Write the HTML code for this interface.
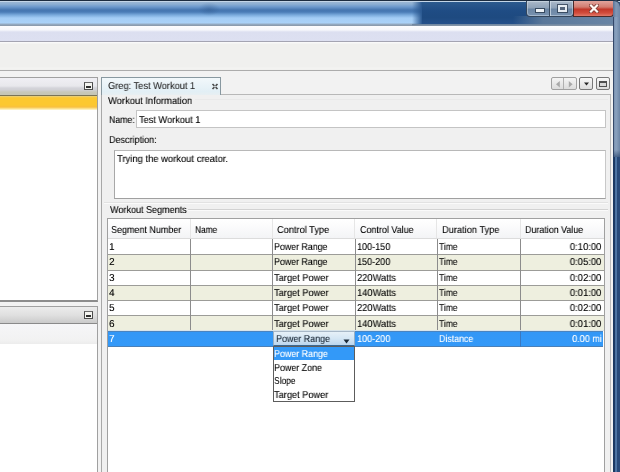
<!DOCTYPE html>
<html><head><meta charset="utf-8">
<style>
*{margin:0;padding:0;box-sizing:border-box}
html,body{width:620px;height:472px;overflow:hidden;background:#f0f0f0}
body{position:relative;font-family:"Liberation Sans",sans-serif;font-size:9.5px;color:#000}
.a{position:absolute}
.t{position:absolute;white-space:pre;line-height:11px;font-size:10px;text-rendering:geometricPrecision;will-change:transform;text-shadow:0.3px 0 0 rgba(0,0,0,0.3)}
</style></head><body>

<!-- title bar -->
<div class="a" id="title" style="left:0;top:0;width:620px;height:26px;background:linear-gradient(to bottom,#1c2c40 0px,#1c2c40 1px,#c4d6e8 1px,#c4d6e8 2px,#9ab6d4 2px,#8eb0d4 4px,#6b98cc 7px,#4676b0 10px,#4a7cb6 12px,#7aaadc 15px,#a4cdf5 18px,#aad2f8 23px,#96aec6 24px,#8896a6 26px)"></div>
<div class="a" style="left:422px;top:2px;width:198px;height:22px;background:linear-gradient(to bottom,#2c5a8e,#1f4c84 40%,#1e4a80 70%,#24508a)"></div>
<div class="a" style="left:412px;top:2px;width:10px;height:22px;background:linear-gradient(to right,rgba(40,84,138,0),#2a5890)"></div>
<div class="a" style="left:198px;top:2px;width:22px;height:14px;background:radial-gradient(ellipse at center,rgba(40,80,130,0.35),rgba(40,80,130,0) 70%)"></div>
<!-- lower dark area under buttons -->
<div class="a" style="left:418px;top:16px;width:202px;height:10px;background:linear-gradient(to right,rgba(90,120,154,0) 0,rgba(90,120,154,0) 95px,#5a789a 125px,#6a86a6 202px)"></div>
<div class="a" style="left:412px;top:24px;width:208px;height:2px;background:linear-gradient(to bottom,#6a84a0,#8a98a8)"></div>

<!-- window buttons -->
<div class="a" style="left:526px;top:1px;width:48px;height:16px;border:1px solid #34465c;border-top:none;border-radius:0 0 4px 4px;background:linear-gradient(to bottom,#b4c0ce 0,#a2b2c4 2px,#8fa2b8 45%,#6c86a4 55%,#7892b0);box-shadow:inset 0 0 0 1px rgba(220,230,240,0.45)"></div>
<div class="a" style="left:549px;top:1px;width:1px;height:15px;background:#3b4d62"></div><div class="a" style="left:550px;top:1px;width:1px;height:15px;background:rgba(210,222,234,0.75)"></div>
<div class="a" style="left:536px;top:9px;width:8px;height:3px;background:#eef2f6;box-shadow:0 0 0 1px rgba(40,56,76,0.8)"></div>
<div class="a" style="left:558px;top:5px;width:9px;height:7px;border:2px solid #e6ecf2;border-top-width:2px;background:#56667c;box-shadow:0 0 0 1px rgba(40,56,76,0.75)"></div>
<div class="a" style="left:573px;top:1px;width:41px;height:16px;border:1px solid #4a2a2a;border-top:none;border-radius:0 0 4px 0;background:linear-gradient(to bottom,#e1a49c,#d27c70 40%,#c2382a 55%,#d24c3c 80%,#e07868)"></div>
<svg class="a" style="left:589px;top:4px" width="10" height="9" viewBox="0 0 10 9"><path d="M2 1.5 L8 7.5 M8 1.5 L2 7.5" stroke="#7a3a34" stroke-width="3.8" stroke-linecap="square"/><path d="M2 1.5 L8 7.5 M8 1.5 L2 7.5" stroke="#fff8f4" stroke-width="2.2" stroke-linecap="square"/></svg>
<div class="a" style="left:613px;top:0;width:7px;height:17px;background:linear-gradient(to right,#5a7294,#8098b6 3px,#6f88a8);border-top-right-radius:6px;box-shadow:inset 0 1px 0 #20324a"></div>

<!-- right window frame -->
<div class="a" style="left:613px;top:17px;width:7px;height:140px;background:linear-gradient(to right,#34486a 0,#34486a 1px,#7890ae 1px,#8aa2c0 3px,#7c94b2 5px,#6a84a6 7px)"></div>
<div class="a" style="left:613px;top:150px;width:7px;height:12px;background:linear-gradient(to bottom,rgba(28,58,100,0),#1c3a64)"></div>
<div class="a" style="left:613px;top:157px;width:7px;height:315px;background:linear-gradient(to right,#1a3862 0,#1c3a64 2px,#4a70a0 2px,#5078a6 4px,#284a7a 4px)"></div>
<div class="a" style="left:611px;top:94px;width:2px;height:378px;background:linear-gradient(to right,#c8d4dc,#eef6fa)"></div>

<!-- menu bar -->
<div class="a" style="left:0;top:26px;width:613px;height:16px;background:linear-gradient(to bottom,#fdfdfe 0,#f6f7fb 4px,#dcdff0 6px,#dde0f1 15px,#a4a4b2 15px)"></div>
<!-- toolbar -->
<div class="a" style="left:0;top:42px;width:613px;height:29px;background:linear-gradient(to bottom,#fafafa 0,#f8f8f8 1px,#f0f0ee 2px,#f0f0ee 25px,#f4f4f2 26px,#f0f0ee 28px,#acacac 28px)"></div>
<div class="a" style="left:0;top:71px;width:613px;height:401px;background:#f2f2f2"></div>

<!-- left top panel -->
<div class="a" style="left:-2px;top:77px;width:100px;height:225px;border:1px solid #a0a0a0;border-bottom:2px solid #8c8c8c;background:#fff"></div>
<div class="a" style="left:0;top:78px;width:97px;height:18px;background:linear-gradient(to bottom,#f0eff4 0,#e8e8ec 8px,#d4d4da 10px,#d0d0d4 12px,#c8c8ba 14px,#c6c6b6 16px);border-bottom:1px solid #7a7456"></div>
<div class="a" style="left:0;top:96px;width:97px;height:14px;background:linear-gradient(to bottom,#e4d088 0,#f6cc50 1px,#fcc830 2px,#fcc830 9px,#f8c040 11px,#fce8a0 13px,#fff8d8 14px)"></div>
<div class="a" style="left:84px;top:82px;width:9px;height:8px;border:1px solid #4c4c4c;border-top-color:#6a6a6a;background:#f4f4f0"></div>
<div class="a" style="left:86px;top:86px;width:5px;height:2px;background:#303030"></div>

<!-- left bottom panel -->
<div class="a" style="left:-2px;top:306px;width:100px;height:170px;border:1px solid #a0a0a0;background:#fff"></div>
<div class="a" style="left:0;top:307px;width:97px;height:17px;background:linear-gradient(to bottom,#ececec,#e0e0e0 50%,#cacaca);border-bottom:1px solid #8a8a8a"></div>
<div class="a" style="left:0;top:324px;width:97px;height:20px;background:linear-gradient(to bottom,#f6f6f8,#f2f2f2 80%,#ececec)"></div>
<div class="a" style="left:84px;top:311px;width:9px;height:8px;border:1px solid #4c4c4c;border-top-color:#6a6a6a;background:#f4f4f0"></div>
<div class="a" style="left:86px;top:315px;width:5px;height:2px;background:#303030"></div>

<!-- right editor panel -->
<div class="a" style="left:101px;top:94px;width:510px;height:380px;border:1px solid #a8a8a8;border-right-color:#bcbcbc;border-top:none;background:#f0f0f0"></div>
<div class="a" style="left:220px;top:94px;width:391px;height:1px;background:#b8b8b8"></div>

<!-- tab -->
<div class="a" style="left:101px;top:77px;width:120px;height:18px;border:1px solid #8898a0;border-bottom:none;background:linear-gradient(to bottom,#f2f8fb,#e2eff5 80%,#e8eff2)"></div>
<svg class="a" style="left:211px;top:83px" width="8" height="7" viewBox="0 0 8 7"><path d="M1.5 1 L6.5 6 M6.5 1 L1.5 6" stroke="#4a4a4a" stroke-width="1.7"/><circle cx="4" cy="3.5" r="1" fill="#d8dee2"/></svg>

<!-- view buttons -->
<div class="a" style="left:551px;top:77px;width:26px;height:13px;border:1px solid #a0a0a0;border-radius:2px;background:linear-gradient(to bottom,#f4f4f4,#dcdcdc)"></div>
<div class="a" style="left:563px;top:78px;width:1px;height:11px;background:#b0b0b0"></div>
<svg class="a" style="left:554px;top:80px" width="20" height="9" viewBox="0 0 20 9"><path d="M5.8 1 L2 4.2 L5.8 7.4 Z" fill="#a8a8a8"/><path d="M14.8 1 L18.6 4.2 L14.8 7.4 Z" fill="#a8a8a8"/></svg>
<div class="a" style="left:579px;top:77px;width:14px;height:13px;border:1px solid #787878;border-radius:2px;background:linear-gradient(to bottom,#f8f8f8,#dcdcdc)"></div>
<svg class="a" style="left:583px;top:82px" width="7" height="4" viewBox="0 0 7 4"><path d="M1 0.5 L6 0.5 L3.5 3.5 Z" fill="#262626"/></svg>
<div class="a" style="left:596px;top:77px;width:14px;height:13px;border:1px solid #787878;border-radius:2px;background:linear-gradient(to bottom,#f8f8f8,#dcdcdc)"></div>
<div class="a" style="left:599px;top:81px;width:8px;height:6px;border:1px solid #505050;border-top-width:2px;background:#d8d8d8"></div>

<!-- Workout Information -->
<div class="a" style="left:195px;top:99px;width:413px;height:1px;background:#e9e9e9"></div>
<div class="a" style="left:104px;top:202px;width:504px;height:1px;background:#e2e2e2"></div>
<div class="a" style="left:104px;top:203px;width:504px;height:1px;background:#fafafa"></div>
<div class="a" style="left:188px;top:209px;width:420px;height:1px;background:#d2d2d2"></div>
<div class="a" style="left:188px;top:210px;width:420px;height:1px;background:#fafafa"></div>

<div class="a" style="left:136px;top:110px;width:470px;height:18px;border:1px solid #c4c4c4;background:#fff"></div>
<div class="a" style="left:114px;top:150px;width:492px;height:49px;border:1px solid #a8a8a8;border-color:#b8b8b8 #c8c8c8 #a0a0a0 #a8a8a8;background:#fff"></div>

<!-- Workout Segments -->
<div class="a" style="left:107px;top:218px;width:498px;height:260px;border:1px solid #a0a0a0;background:#fff"></div>
<!-- table header -->
<div class="a" style="left:108px;top:219px;width:496px;height:19px;background:linear-gradient(to bottom,#ffffff,#fbfbfc 40%,#f3f4f6)"></div>
<div class="a" style="left:108px;top:238px;width:496px;height:1px;background:#dcdcdc"></div>
<div class="a" style="left:190px;top:219px;width:1px;height:19px;background:#e6e6e6"></div>
<div class="a" style="left:272px;top:219px;width:1px;height:19px;background:#e6e6e6"></div>
<div class="a" style="left:354px;top:219px;width:1px;height:19px;background:#e6e6e6"></div>
<div class="a" style="left:436px;top:219px;width:1px;height:19px;background:#e6e6e6"></div>
<div class="a" style="left:520px;top:219px;width:1px;height:19px;background:#e6e6e6"></div>
<!-- rows -->
<div class="a" style="left:108px;top:255px;width:496px;height:15px;background:#eeefdf"></div>
<div class="a" style="left:108px;top:286px;width:496px;height:14px;background:#eeefdf"></div>
<div class="a" style="left:108px;top:316px;width:496px;height:14px;background:#eeefdf"></div>
<div class="a" style="left:108px;top:254px;width:496px;height:1px;background:#9c9c98"></div>
<div class="a" style="left:108px;top:270px;width:496px;height:1px;background:#9c9c98"></div>
<div class="a" style="left:108px;top:285px;width:496px;height:1px;background:#9c9c98"></div>
<div class="a" style="left:108px;top:300px;width:496px;height:1px;background:#9c9c98"></div>
<div class="a" style="left:108px;top:315px;width:496px;height:1px;background:#9c9c98"></div>
<div class="a" style="left:108px;top:330px;width:496px;height:1px;background:#d8e4ea"></div>
<div class="a" style="left:190px;top:239px;width:1px;height:91px;background:#8c8c8c"></div>
<div class="a" style="left:272px;top:239px;width:1px;height:91px;background:#8c8c8c"></div>
<div class="a" style="left:355px;top:239px;width:1px;height:91px;background:#8c8c8c"></div>
<div class="a" style="left:437px;top:239px;width:1px;height:91px;background:#8c8c8c"></div>
<div class="a" style="left:520px;top:239px;width:1px;height:91px;background:#8c8c8c"></div>
<!-- selected row -->
<div class="a" style="left:108px;top:331px;width:495px;height:16px;background:linear-gradient(to bottom,#4a84c0 0,#4a84c0 1px,#3397f6 1px,#3399f8 15px,#4a80b8 15px)"></div>
<div class="a" style="left:520px;top:331px;width:1px;height:16px;background:#3a78c0"></div>
<!-- combo -->
<div class="a" style="left:273px;top:331px;width:82px;height:15px;border-top:1px solid #a8b8c8;border-bottom:1px solid #3c6890;border-left:1px solid #9ab0c4;border-right:1px solid #9ab0c4;background:linear-gradient(to bottom,#e6f0f8,#d4e6f4 50%,#bcd6ee)"></div>
<svg class="a" style="left:343px;top:339px" width="7" height="5" viewBox="0 0 7 5"><path d="M0.5 0.5 L6.5 0.5 L3.5 4.5 Z" fill="#1a2a3a"/></svg>
<!-- dropdown list -->
<div class="a" style="left:273px;top:346px;width:82px;height:56px;border:1px solid #5c5c5c;background:#fff"></div>
<div class="a" style="left:274px;top:347px;width:80px;height:13px;background:#3399f8"></div>

<div class="t" style="top:81px;left:108px;transform:scaleX(0.9254);transform-origin:left center;color:#2a2a2a;">Greg: Test Workout 1</div>
<div class="t" style="top:96px;left:108px;transform:scaleX(0.9370);transform-origin:left center;">Workout Information</div>
<div class="t" style="top:115px;left:109.3px;transform:scaleX(0.8726);transform-origin:left center;">Name:</div>
<div class="t" style="top:115px;left:138.9px;transform:scaleX(0.9216);transform-origin:left center;">Test Workout 1</div>
<div class="t" style="top:135px;left:109.3px;transform:scaleX(0.9013);transform-origin:left center;">Description:</div>
<div class="t" style="top:154px;left:116.5px;transform:scaleX(0.9406);transform-origin:left center;">Trying the workout creator.</div>
<div class="t" style="top:205px;left:109.6px;transform:scaleX(0.9038);transform-origin:left center;">Workout Segments</div>
<div class="t" style="top:225px;left:110.5px;transform:scaleX(0.8970);transform-origin:left center;">Segment Number</div>
<div class="t" style="top:225px;left:194.7px;transform:scaleX(0.8319);transform-origin:left center;">Name</div>
<div class="t" style="top:225px;left:276.9px;transform:scaleX(0.9219);transform-origin:left center;">Control Type</div>
<div class="t" style="top:225px;left:359.6px;transform:scaleX(0.8954);transform-origin:left center;">Control Value</div>
<div class="t" style="top:225px;left:441.6px;transform:scaleX(0.9246);transform-origin:left center;">Duration Type</div>
<div class="t" style="top:225px;left:525px;transform:scaleX(0.8896);transform-origin:left center;">Duration Value</div>
<div class="t" style="top:242px;left:108.5px;">1</div>
<div class="t" style="top:242px;left:273.7px;transform:scaleX(0.8813);transform-origin:left center;">Power Range</div>
<div class="t" style="top:242px;left:356.6px;transform:scaleX(0.9046);transform-origin:left center;">100-150</div>
<div class="t" style="top:242px;left:438.5px;transform:scaleX(0.8463);transform-origin:left center;">Time</div>
<div class="t" style="top:242px;right:18.40px;transform:scaleX(0.9468);transform-origin:right center;">0:10:00</div>
<div class="t" style="top:257px;left:108.5px;">2</div>
<div class="t" style="top:257px;left:273.7px;transform:scaleX(0.8813);transform-origin:left center;">Power Range</div>
<div class="t" style="top:257px;left:356.6px;transform:scaleX(0.9046);transform-origin:left center;">150-200</div>
<div class="t" style="top:257px;left:438.5px;transform:scaleX(0.8463);transform-origin:left center;">Time</div>
<div class="t" style="top:257px;right:18.40px;transform:scaleX(0.9468);transform-origin:right center;">0:05:00</div>
<div class="t" style="top:273px;left:108.5px;">3</div>
<div class="t" style="top:273px;left:273.7px;transform:scaleX(0.9250);transform-origin:left center;">Target Power</div>
<div class="t" style="top:273px;left:356.6px;transform:scaleX(0.9313);transform-origin:left center;">220Watts</div>
<div class="t" style="top:273px;left:438.5px;transform:scaleX(0.8463);transform-origin:left center;">Time</div>
<div class="t" style="top:273px;right:18.40px;transform:scaleX(0.9468);transform-origin:right center;">0:02:00</div>
<div class="t" style="top:288px;left:108.5px;">4</div>
<div class="t" style="top:288px;left:273.7px;transform:scaleX(0.9250);transform-origin:left center;">Target Power</div>
<div class="t" style="top:288px;left:356.6px;transform:scaleX(0.9313);transform-origin:left center;">140Watts</div>
<div class="t" style="top:288px;left:438.5px;transform:scaleX(0.8463);transform-origin:left center;">Time</div>
<div class="t" style="top:288px;right:18.40px;transform:scaleX(0.9468);transform-origin:right center;">0:01:00</div>
<div class="t" style="top:303px;left:108.5px;">5</div>
<div class="t" style="top:303px;left:273.7px;transform:scaleX(0.9250);transform-origin:left center;">Target Power</div>
<div class="t" style="top:303px;left:356.6px;transform:scaleX(0.9313);transform-origin:left center;">220Watts</div>
<div class="t" style="top:303px;left:438.5px;transform:scaleX(0.8463);transform-origin:left center;">Time</div>
<div class="t" style="top:303px;right:18.40px;transform:scaleX(0.9468);transform-origin:right center;">0:02:00</div>
<div class="t" style="top:319px;left:108.5px;">6</div>
<div class="t" style="top:319px;left:273.7px;transform:scaleX(0.9250);transform-origin:left center;">Target Power</div>
<div class="t" style="top:319px;left:356.6px;transform:scaleX(0.9313);transform-origin:left center;">140Watts</div>
<div class="t" style="top:319px;left:438.5px;transform:scaleX(0.8463);transform-origin:left center;">Time</div>
<div class="t" style="top:319px;right:18.40px;transform:scaleX(0.9468);transform-origin:right center;">0:01:00</div>
<div class="t" style="top:334px;left:108.5px;color:#fff;text-shadow:0.35px 0 0 rgba(255,255,255,0.4);">7</div>
<div class="t" style="top:334px;left:276px;transform:scaleX(0.8912);transform-origin:left center;color:#1a2a3a;">Power Range</div>
<div class="t" style="top:334px;left:356.6px;transform:scaleX(0.9046);transform-origin:left center;color:#fff;text-shadow:0.35px 0 0 rgba(255,255,255,0.4);">100-200</div>
<div class="t" style="top:334px;left:439px;transform:scaleX(0.8790);transform-origin:left center;color:#fff;text-shadow:0.35px 0 0 rgba(255,255,255,0.4);">Distance</div>
<div class="t" style="top:334px;right:18.40px;transform:scaleX(0.9056);transform-origin:right center;color:#fff;text-shadow:0.35px 0 0 rgba(255,255,255,0.4);">0.00 mi</div>
<div class="t" style="top:349px;left:273.8px;transform:scaleX(0.8879);transform-origin:left center;color:#fff;text-shadow:0.35px 0 0 rgba(255,255,255,0.4);">Power Range</div>
<div class="t" style="top:363px;left:273.8px;transform:scaleX(0.8902);transform-origin:left center;">Power Zone</div>
<div class="t" style="top:376px;left:273.8px;transform:scaleX(0.8406);transform-origin:left center;">Slope</div>
<div class="t" style="top:390px;left:273.8px;transform:scaleX(0.9216);transform-origin:left center;">Target Power</div>

</body></html>
